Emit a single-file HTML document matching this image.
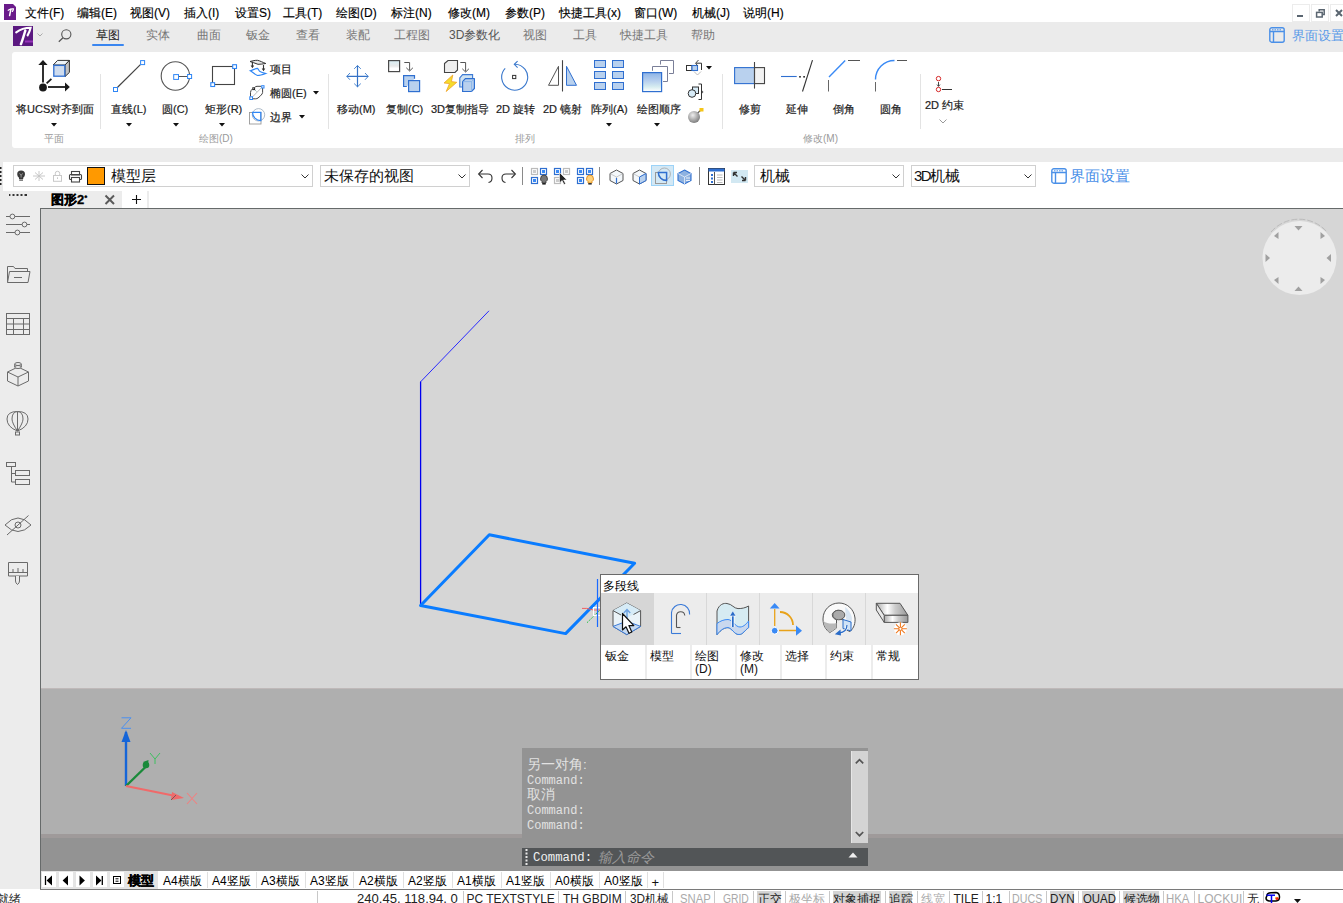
<!DOCTYPE html>
<html><head><meta charset="utf-8">
<style>
*{margin:0;padding:0;box-sizing:border-box}
html,body{width:1343px;height:903px;overflow:hidden;background:#fff;font-family:"Liberation Sans",sans-serif;color:#000}
.a{position:absolute}
.t{position:absolute;white-space:nowrap;line-height:1}
svg{position:absolute;overflow:visible}
</style></head><body>
<div class="a" style="left:0px;top:0px;width:1343px;height:22px;background:#fff;"></div>
<div class="a" style="left:0px;top:22px;width:1343px;height:169px;background:#ebebeb;"></div>
<div class="a" style="left:12px;top:52px;width:1340px;height:96px;background:#fff;border-radius:3px"></div>
<div class="a" style="left:3px;top:162px;width:1340px;height:29px;background:#fff;"></div>
<svg style="left:0px;top:165px;" width="3" height="22" viewBox="0 0 3 22"><g fill="#222"><rect x="0" y="2" width="1.5" height="2"/><rect x="0" y="6" width="1.5" height="2"/><rect x="0" y="10" width="1.5" height="2"/><rect x="0" y="14" width="1.5" height="2"/><rect x="0" y="18" width="1.5" height="2"/></g></svg>
<div class="a" style="left:0px;top:191px;width:40px;height:698px;background:#ececec;"></div>
<div class="a" style="left:40px;top:191px;width:1303px;height:17px;background:#fff;"></div>
<div class="a" style="left:40px;top:191px;width:82px;height:17px;background:#ececec;"></div>
<div class="a" style="left:147px;top:191px;width:2px;height:17px;background:#ececec;"></div>
<div class="a" style="left:40px;top:208px;width:1303px;height:682px;background:#666a6a;"></div>
<div class="a" style="left:41px;top:209px;width:1302px;height:479px;background:#d6d6d6;"></div>
<div class="a" style="left:41px;top:688px;width:1302px;height:146px;background:#afafaf;"></div>
<div class="a" style="left:41px;top:688px;width:1302px;height:1px;background:#bfb9b9;"></div>
<div class="a" style="left:41px;top:834px;width:1302px;height:4px;background:#9f9a9a;"></div>
<div class="a" style="left:41px;top:838px;width:1302px;height:33px;background:#939393;"></div>
<div class="a" style="left:41px;top:871px;width:1302px;height:18px;background:#fff;"></div>
<div class="a" style="left:0px;top:889px;width:1343px;height:14px;background:#fff;"></div>
<div class="t" style="left:25px;top:7px;font-size:12px;color:#000;-webkit-text-stroke:0.15px #000">文件(F)</div>
<div class="t" style="left:77px;top:7px;font-size:12px;color:#000;-webkit-text-stroke:0.15px #000">编辑(E)</div>
<div class="t" style="left:130px;top:7px;font-size:12px;color:#000;-webkit-text-stroke:0.15px #000">视图(V)</div>
<div class="t" style="left:184px;top:7px;font-size:12px;color:#000;-webkit-text-stroke:0.15px #000">插入(I)</div>
<div class="t" style="left:235px;top:7px;font-size:12px;color:#000;-webkit-text-stroke:0.15px #000">设置S)</div>
<div class="t" style="left:283px;top:7px;font-size:12px;color:#000;-webkit-text-stroke:0.15px #000">工具(T)</div>
<div class="t" style="left:336px;top:7px;font-size:12px;color:#000;-webkit-text-stroke:0.15px #000">绘图(D)</div>
<div class="t" style="left:391px;top:7px;font-size:12px;color:#000;-webkit-text-stroke:0.15px #000">标注(N)</div>
<div class="t" style="left:448px;top:7px;font-size:12px;color:#000;-webkit-text-stroke:0.15px #000">修改(M)</div>
<div class="t" style="left:505px;top:7px;font-size:12px;color:#000;-webkit-text-stroke:0.15px #000">参数(P)</div>
<div class="t" style="left:559px;top:7px;font-size:12px;color:#000;-webkit-text-stroke:0.15px #000">快捷工具(x)</div>
<div class="t" style="left:634px;top:7px;font-size:12px;color:#000;-webkit-text-stroke:0.15px #000">窗口(W)</div>
<div class="t" style="left:692px;top:7px;font-size:12px;color:#000;-webkit-text-stroke:0.15px #000">机械(J)</div>
<div class="t" style="left:743px;top:7px;font-size:12px;color:#000;-webkit-text-stroke:0.15px #000">说明(H)</div>
<div class="a" style="left:1292px;top:4px;width:18px;height:18px;background:#fff;border:1px solid #ececec"></div>
<div class="a" style="left:1311px;top:4px;width:18px;height:18px;background:#fff;border:1px solid #ececec"></div>
<div class="a" style="left:1330px;top:4px;width:18px;height:18px;background:#fff;border:1px solid #ececec"></div>
<svg style="left:1292px;top:4px;" width="18" height="18" viewBox="0 0 18 18"><rect x="5" y="11" width="6" height="2" fill="#5a6570"/></svg>
<svg style="left:1311px;top:4px;" width="18" height="18" viewBox="0 0 18 18"><rect x="5.6" y="8.4" width="5.6" height="4.6" fill="none" stroke="#5a6570" stroke-width="1.5"/><path d="M8.2 7.6 V5.8 H13.2 V10.4 H11.8" fill="none" stroke="#5a6570" stroke-width="1.5"/></svg>
<svg style="left:1330px;top:4px;" width="18" height="18" viewBox="0 0 18 18"><path d="M6 6 L12 12 M12 6 L6 12" stroke="#5a6570" stroke-width="2"/></svg>
<svg style="left:4px;top:4px;" width="12" height="16" viewBox="0 0 12 16"><path d="M0 0 H9 L12 3 V16 H0 Z" fill="#6a1b8a"/><path d="M4.2 6.2 C6 5.2 8 4.8 9.4 5 C9.2 6.3 8.8 7 8.3 7.4" stroke="#fff" stroke-width="1.3" fill="none" stroke-linecap="round"/><path d="M6.8 5.6 L5.6 11.6" stroke="#fff" stroke-width="1.5" stroke-linecap="round"/></svg>
<svg style="left:13px;top:26px;" width="20" height="20" viewBox="0 0 20 20"><rect width="20" height="20" fill="#5a1880"/><rect x="12" y="14.5" width="8" height="2" fill="#a63cc8" opacity=".8"/><path d="M3.2 6.3 C6 4.2 12 1.8 17.6 1.8 C17 4.5 16 7 14.6 9.4" stroke="#fff" stroke-width="2.1" fill="none" stroke-linecap="round"/><path d="M12.3 4.6 C11 9 9.6 14 7.9 18.2" stroke="#fff" stroke-width="2.5" fill="none" stroke-linecap="round"/></svg>
<svg style="left:37px;top:33px;" width="6" height="4" viewBox="0 0 6 4"><path d="M0.5 0.5 L3 3 L5.5 0.5" stroke="#aaa" fill="none"/></svg>
<svg style="left:58px;top:29px;" width="14" height="14" viewBox="0 0 14 14"><circle cx="8.3" cy="5.3" r="4.6" stroke="#555" stroke-width="1.1" fill="none"/><path d="M5 8.7 L0.8 12.8" stroke="#555" stroke-width="1.2"/></svg>
<div class="t" style="left:96px;top:29px;font-size:12px;color:#222;">草图</div>
<div class="t" style="left:146px;top:29px;font-size:12px;color:#777;">实体</div>
<div class="t" style="left:197px;top:29px;font-size:12px;color:#777;">曲面</div>
<div class="t" style="left:246px;top:29px;font-size:12px;color:#777;">钣金</div>
<div class="t" style="left:296px;top:29px;font-size:12px;color:#777;">查看</div>
<div class="t" style="left:346px;top:29px;font-size:12px;color:#777;">装配</div>
<div class="t" style="left:394px;top:29px;font-size:12px;color:#777;">工程图</div>
<div class="t" style="left:449px;top:29px;font-size:12px;color:#555;">3D参数化</div>
<div class="t" style="left:523px;top:29px;font-size:12px;color:#777;">视图</div>
<div class="t" style="left:573px;top:29px;font-size:12px;color:#777;">工具</div>
<div class="t" style="left:620px;top:29px;font-size:12px;color:#777;">快捷工具</div>
<div class="t" style="left:691px;top:29px;font-size:12px;color:#777;">帮助</div>
<div class="a" style="left:92px;top:44px;width:32px;height:2px;background:#3a86f0;border-radius:1px"></div>
<svg style="left:1269px;top:27px;" width="16" height="16" viewBox="0 0 16 16"><rect x="0.8" y="0.8" width="14.4" height="14.4" rx="2" fill="none" stroke="#4a90e8" stroke-width="1.4"/><path d="M1 4.5 H15 M4.5 4.5 V15" stroke="#4a90e8" stroke-width="1.4"/><path d="M3 2.8 H13" stroke="#4a90e8" stroke-width="1" stroke-dasharray="1.5 1"/></svg>
<div class="t" style="left:1292px;top:29px;font-size:13px;color:#5a9ae8;">界面设置</div>
<div class="t" style="left:16px;top:104px;font-size:11px;color:#222;-webkit-text-stroke:0.2px #222">将UCS对齐到面</div>
<div class="t" style="left:111px;top:104px;font-size:11px;color:#222;-webkit-text-stroke:0.2px #222">直线(L)</div>
<div class="t" style="left:162px;top:104px;font-size:11px;color:#222;-webkit-text-stroke:0.2px #222">圆(C)</div>
<div class="t" style="left:205px;top:104px;font-size:11px;color:#222;-webkit-text-stroke:0.2px #222">矩形(R)</div>
<div class="t" style="left:337px;top:104px;font-size:11px;color:#222;-webkit-text-stroke:0.2px #222">移动(M)</div>
<div class="t" style="left:386px;top:104px;font-size:11px;color:#222;-webkit-text-stroke:0.2px #222">复制(C)</div>
<div class="t" style="left:431px;top:104px;font-size:11px;color:#222;-webkit-text-stroke:0.2px #222">3D复制指导</div>
<div class="t" style="left:496px;top:104px;font-size:11px;color:#222;-webkit-text-stroke:0.2px #222">2D 旋转</div>
<div class="t" style="left:543px;top:104px;font-size:11px;color:#222;-webkit-text-stroke:0.2px #222">2D 镜射</div>
<div class="t" style="left:591px;top:104px;font-size:11px;color:#222;-webkit-text-stroke:0.2px #222">阵列(A)</div>
<div class="t" style="left:637px;top:104px;font-size:11px;color:#222;-webkit-text-stroke:0.2px #222">绘图顺序</div>
<div class="t" style="left:739px;top:104px;font-size:11px;color:#222;-webkit-text-stroke:0.2px #222">修剪</div>
<div class="t" style="left:786px;top:104px;font-size:11px;color:#222;-webkit-text-stroke:0.2px #222">延伸</div>
<div class="t" style="left:833px;top:104px;font-size:11px;color:#222;-webkit-text-stroke:0.2px #222">倒角</div>
<div class="t" style="left:880px;top:104px;font-size:11px;color:#222;-webkit-text-stroke:0.2px #222">圆角</div>
<div class="t" style="left:925px;top:100px;font-size:11px;color:#222;-webkit-text-stroke:0.2px #222">2D 约束</div>
<div class="t" style="left:270px;top:64px;font-size:11px;color:#222;-webkit-text-stroke:0.2px #222">项目</div>
<div class="t" style="left:270px;top:88px;font-size:11px;color:#222;-webkit-text-stroke:0.2px #222">椭圆(E)</div>
<div class="t" style="left:270px;top:112px;font-size:11px;color:#222;-webkit-text-stroke:0.2px #222">边界</div>
<div class="t" style="left:44px;top:134px;font-size:10px;color:#999;">平面</div>
<div class="t" style="left:199px;top:134px;font-size:10px;color:#999;">绘图(D)</div>
<div class="t" style="left:515px;top:134px;font-size:10px;color:#999;">排列</div>
<div class="t" style="left:803px;top:134px;font-size:10px;color:#999;">修改(M)</div>
<svg style="left:51px;top:123px;" width="6" height="4" viewBox="0 0 6 4"><path d="M0 0 H6 L3 3.4 Z" fill="#111"/></svg>
<svg style="left:126px;top:123px;" width="6" height="4" viewBox="0 0 6 4"><path d="M0 0 H6 L3 3.4 Z" fill="#111"/></svg>
<svg style="left:173px;top:123px;" width="6" height="4" viewBox="0 0 6 4"><path d="M0 0 H6 L3 3.4 Z" fill="#111"/></svg>
<svg style="left:219px;top:123px;" width="6" height="4" viewBox="0 0 6 4"><path d="M0 0 H6 L3 3.4 Z" fill="#111"/></svg>
<svg style="left:606px;top:123px;" width="6" height="4" viewBox="0 0 6 4"><path d="M0 0 H6 L3 3.4 Z" fill="#111"/></svg>
<svg style="left:654px;top:123px;" width="6" height="4" viewBox="0 0 6 4"><path d="M0 0 H6 L3 3.4 Z" fill="#111"/></svg>
<svg style="left:313px;top:91px;" width="6" height="4" viewBox="0 0 6 4"><path d="M0 0 H6 L3 3.4 Z" fill="#111"/></svg>
<svg style="left:299px;top:115px;" width="6" height="4" viewBox="0 0 6 4"><path d="M0 0 H6 L3 3.4 Z" fill="#111"/></svg>
<svg style="left:706px;top:66px;" width="6" height="4" viewBox="0 0 6 4"><path d="M0 0 H6 L3 3.4 Z" fill="#111"/></svg>
<svg style="left:939px;top:119px;" width="8" height="5" viewBox="0 0 8 5"><path d="M0.5 0.5 L4 4 L7.5 0.5" stroke="#999" fill="none"/></svg>
<div class="a" style="left:100px;top:74px;width:1px;height:55px;background:#e3e3e3;"></div>
<div class="a" style="left:328px;top:74px;width:1px;height:55px;background:#e3e3e3;"></div>
<div class="a" style="left:722px;top:74px;width:1px;height:55px;background:#e3e3e3;"></div>
<div class="a" style="left:920px;top:74px;width:1px;height:55px;background:#e3e3e3;"></div>
<svg style="left:34px;top:56px;" width="40" height="40" viewBox="0 0 40 40"><path d="M9 26.5 V8.5" stroke="#1a1a1a" stroke-width="1.8"/><path d="M4.3 9 L9 4 L13.6 9 Z" fill="#1a1a1a"/><circle cx="9" cy="31.5" r="3.9" fill="#1a1a1a"/><path d="M14 31 H31" stroke="#1a1a1a" stroke-width="1.8"/><path d="M31 26.5 L35.8 31 L31 35.5 Z" fill="#1a1a1a"/><path d="M12.6 27.4 L17.4 22.8" stroke="#1a1a1a" stroke-width="1.8"/><path d="M19.2 9 L23.6 4.4 H35.4 L31 9 Z" fill="#eef4f8" stroke="#333" stroke-width="1"/><path d="M31 9 L35.4 4.4 V16.4 L31 20.6 Z" fill="#c2c2c2" stroke="#333" stroke-width="1"/><rect x="19.8" y="9.4" width="11" height="10.8" fill="#cfdcee" stroke="#2f6fd0" stroke-width="1.3"/></svg>
<svg style="left:108px;top:56px;" width="40" height="40" viewBox="0 0 40 40"><path d="M9.6 31.2 L32.4 8.6" stroke="#444" stroke-width="1.2"/><rect x="5.5" y="31.5" width="4" height="4" fill="#fff" stroke="#2f86f5" stroke-width="1"/><rect x="32.6" y="4.6" width="4" height="4" fill="#fff" stroke="#2f86f5" stroke-width="1"/></svg>
<svg style="left:156px;top:56px;" width="40" height="40" viewBox="0 0 40 40"><circle cx="19.4" cy="20" r="14.2" fill="none" stroke="#555" stroke-width="1.1"/><path d="M22.6 20.5 H31.2" stroke="#555" stroke-width="1"/><rect x="17.7" y="18.6" width="4.8" height="4.8" fill="#fff" stroke="#2f86f5" stroke-width="1"/><rect x="31.6" y="18.5" width="4" height="4" fill="#fff" stroke="#2f86f5" stroke-width="1"/></svg>
<svg style="left:204px;top:56px;" width="40" height="40" viewBox="0 0 40 40"><rect x="8.5" y="10.5" width="22" height="18" fill="none" stroke="#444" stroke-width="1.1"/><rect x="28.7" y="8.7" width="3.8" height="3.8" fill="#fff" stroke="#2f86f5" stroke-width="1.1"/><rect x="6.8" y="26.7" width="3.8" height="3.8" fill="#fff" stroke="#2f86f5" stroke-width="1.1"/></svg>
<svg style="left:246px;top:58px;" width="24" height="18" viewBox="0 0 24 18"><path d="M4 3.5 C7 2.8 9 2.2 11.5 2.3 C14 2.8 17 4.5 19.8 5.5 C17 6 14.5 6.3 12 6.3 C9 5.5 6.5 4 4 3.5 Z" fill="#e8e8e8" stroke="#333" stroke-width="1"/><path d="M6.4 3.8 V8 M17.5 7 V11" stroke="#333" stroke-width="1.1"/><path d="M4.6 7.6 H8.2 L6.4 10.2 Z M15.7 10.6 H19.3 L17.5 13.2 Z" fill="#333"/><path d="M4.3 12.8 C7 12 9 10.5 11.4 10.3 C12.5 11 13 13 14 13.5 C16 14.5 18 15 19.8 15.5 C17 16.5 14 17.5 11.5 17.5 C9 16.5 6.5 14 4.3 12.8 Z" fill="#fff" stroke="#2f86f5" stroke-width="1.2"/></svg>
<svg style="left:246px;top:83px;" width="24" height="20" viewBox="0 0 24 20"><path d="M4.5 13.5 V9.5 Q4.5 7.6 6.4 6 M8.6 4.6 Q9.5 3.3 11 3.3 H15.2 M16.6 4.8 V9.5 Q16.6 10.8 14.5 12.8 L12 15 Q11 15.8 9.5 15.8 H6.8" fill="none" stroke="#444" stroke-width="1"/><path d="M6.6 13.8 L15.4 4.8" stroke="#aaa" stroke-width=".8"/><path d="M8.6 6.6 L10.6 8.6" stroke="#8aa" stroke-width=".8"/><rect x="6.8" y="4.8" width="1.8" height="1.8" fill="#fff" stroke="#222" stroke-width="1"/><rect x="15.7" y="2.7" width="2.3" height="2.3" fill="#fff" stroke="#2f86f5" stroke-width="1"/><rect x="3.8" y="13.8" width="2.7" height="2.7" fill="#fff" stroke="#2f86f5" stroke-width="1"/></svg>
<svg style="left:246px;top:107.5px;" width="24" height="22" viewBox="0 0 24 22"><rect x="3.5" y="4.5" width="11.5" height="11.5" fill="none" stroke="#999" stroke-width="0.9"/><circle cx="12.5" cy="6.8" r="6.2" fill="none" stroke="#9ab" stroke-width="0.8"/><path d="M6.5 4.3 H14.8 V12.6 A8.3 8.3 0 0 1 6.5 4.3 Z" fill="none" stroke="#2f86f5" stroke-width="1.2"/></svg>
<svg style="left:340px;top:56px;" width="40" height="40" viewBox="0 0 40 40"><path d="M6.8 20.4 H28.2 M17.5 9.6 V31" stroke="#3572c6" stroke-width="1.2"/><path d="M10 17 L6.8 20.4 L10 23.8 M25 17 L28.2 20.4 L25 23.8 M14.2 12.8 L17.5 9.6 L20.8 12.8 M14.2 27.6 L17.5 30.8 L20.8 27.6" fill="none" stroke="#4a86d0" stroke-width="1"/></svg>
<svg style="left:384px;top:56px;" width="40" height="40" viewBox="0 0 40 40"><defs><linearGradient id="gcp" x1="0" y1="0" x2="0" y2="1"><stop offset="0" stop-color="#d8eef4"/><stop offset=".5" stop-color="#e9e9e9"/><stop offset=".7" stop-color="#fff"/></linearGradient></defs><rect x="4.6" y="4.6" width="11" height="11" fill="url(#gcp)" stroke="#4a4a4a" stroke-width="1.2"/><path d="M20.3 6.5 H25.6 V14.5" fill="none" stroke="#555" stroke-width="1"/><path d="M22.3 11.8 L25.6 15 L28.9 11.8" fill="none" stroke="#555" stroke-width="1"/><path d="M22.8 30.5 H19.6 V19.6 H30.5 V22.8" fill="#b9d1ee" stroke="#2f6fd0" stroke-width="1.2"/><rect x="24.6" y="24.6" width="11" height="11" fill="#b9d1ee" stroke="#2f6fd0" stroke-width="1.2"/></svg>
<svg style="left:440px;top:56px;" width="40" height="40" viewBox="0 0 40 40"><path d="M4.5 7.5 L8 4.5 H17.5 V14 L15 16.5 H4.5 Z" fill="#eee" stroke="#444" stroke-width="1.1"/><path d="M20.3 6.5 H25.6 V15.5" fill="none" stroke="#555" stroke-width="1"/><path d="M22.3 12.8 L25.6 16 L28.9 12.8" fill="none" stroke="#555" stroke-width="1"/><path d="M12.8 19 L4 27 L9.5 27.6 L6.2 35.5 L16.8 26.3 L11.4 25.6 Z" fill="#f5dc2c" stroke="#f0a32a" stroke-width="0.8"/><path d="M19.8 21.8 L22.6 18.6 H32.6 V28 L29.8 31 H19.8 Z" fill="#cfe3f2" stroke="#3d7ad4" stroke-width="1.1"/><path d="M22.6 25.6 L25.4 22.6 H34.4 V32.5 L31.6 35.5 H22.6 Z" fill="#b9d1ee" stroke="#2f6fd0" stroke-width="1.2"/><path d="M22.6 25.6 H31.6 L34.4 22.6 M31.6 25.6 V35.5" fill="none" stroke="#7fb0e8" stroke-width="0.8"/></svg>
<svg style="left:496px;top:56px;" width="40" height="40" viewBox="0 0 40 40"><path d="M9.2 12.3 A13 13 0 1 0 19 8.2" fill="none" stroke="#3a78cc" stroke-width="1.1"/><path d="M21.6 5.2 L18.3 8.3 L21.6 11.6" fill="none" stroke="#3a78cc" stroke-width="1.1"/><rect x="16.6" y="19.4" width="3.2" height="3.2" fill="#fff" stroke="#333" stroke-width="1"/></svg>
<svg style="left:542px;top:56px;" width="40" height="40" viewBox="0 0 40 40"><path d="M20.5 4.2 V35.5" stroke="#444" stroke-width="1.1"/><path d="M16.5 10.3 V29.3 H6.5 Z" fill="#fff" stroke="#555" stroke-width="1"/><path d="M24.5 10.3 L34.5 29.3 H24.5 Z" fill="#b9d1ee" stroke="#2f6fd0" stroke-width="1"/></svg>
<svg style="left:589px;top:56px;" width="40" height="40" viewBox="0 0 40 40"><rect x="5.5" y="4.5" width="11" height="7" fill="#b9d1ee" stroke="#2f6fd0" stroke-width="1"/><rect x="5.5" y="15.5" width="11" height="7" fill="#b9d1ee" stroke="#2f6fd0" stroke-width="1"/><rect x="5.5" y="26.5" width="11" height="7" fill="#b9d1ee" stroke="#2f6fd0" stroke-width="1"/><rect x="23.5" y="4.5" width="11" height="7" fill="#b9d1ee" stroke="#2f6fd0" stroke-width="1"/><rect x="23.5" y="15.5" width="11" height="7" fill="#b9d1ee" stroke="#2f6fd0" stroke-width="1"/><rect x="23.5" y="26.5" width="11" height="7" fill="#b9d1ee" stroke="#2f6fd0" stroke-width="1"/></svg>
<svg style="left:638px;top:56px;" width="40" height="40" viewBox="0 0 40 40"><defs><linearGradient id="gdo" x1="0" y1="0" x2="0" y2="1"><stop offset="0" stop-color="#8db3e6"/><stop offset=".45" stop-color="#b8d0ee"/><stop offset=".75" stop-color="#d6ecf0"/><stop offset="1" stop-color="#fff"/></linearGradient></defs><path d="M22.5 8.5 V4.5 H35.5 V17.5 H31" fill="none" stroke="#7a7f98" stroke-width="1"/><path d="M14.5 14.8 V10.5 H29.5 V25.5 H25" fill="none" stroke="#7a7f98" stroke-width="1"/><rect x="4.6" y="16.6" width="19" height="19" fill="url(#gdo)" stroke="#2f6fd0" stroke-width="1.2"/></svg>
<svg style="left:682px;top:56px;" width="36" height="72" viewBox="0 0 36 72"><rect x="4.5" y="9.5" width="5.5" height="5" fill="#fff" stroke="#333" stroke-width="1"/><rect x="10" y="9.5" width="5.5" height="5" fill="#b9d1ee" stroke="#2f6fd0" stroke-width="1.1"/><path d="M14 7.2 H19.5 V14" fill="none" stroke="#333" stroke-width="1"/><path d="M16.5 4 L13.5 7.3 L15.5 9.5" fill="none" stroke="#333" stroke-width="0.9"/><path d="M12 15.5 L15.5 19 L19 15.5" fill="none" stroke="#aaa" stroke-width="0.8"/><rect x="10.5" y="31" width="6" height="6.5" fill="#d8ecf8" stroke="#333" stroke-width="1"/><circle cx="10" cy="37.5" r="3.8" fill="#d8ecf8" stroke="#333" stroke-width="1"/><path d="M16.5 28 H19.5 V43.5 H16.5" fill="none" stroke="#333" stroke-width="1"/><path d="M20 34.5 L21.5 36 L20 37.5 Z" fill="#555"/><defs><radialGradient id="gbm" cx=".4" cy=".35" r=".7"><stop offset="0" stop-color="#eee"/><stop offset="1" stop-color="#777"/></radialGradient></defs><path d="M14.5 58 L19 54" stroke="#555" stroke-width="1.2"/><rect x="17.5" y="52" width="4" height="3.5" fill="#f5c518"/><circle cx="12" cy="61" r="6" fill="url(#gbm)"/></svg>
<svg style="left:730px;top:56px;" width="40" height="40" viewBox="0 0 40 40"><rect x="4.6" y="11.6" width="20" height="16" fill="#b9d1ee" stroke="#2f6fd0" stroke-width="1.1"/><rect x="24.5" y="11.6" width="10" height="16" fill="#f2f2f2" stroke="#444" stroke-width="1.1"/><path d="M24.5 6 V32.6" stroke="#444" stroke-width="1.1"/></svg>
<svg style="left:777px;top:56px;" width="40" height="40" viewBox="0 0 40 40"><path d="M4 20.5 H19.7" stroke="#2f6fd0" stroke-width="1.1"/><rect x="22.2" y="20" width="1.6" height="1.6" fill="#222"/><rect x="26.3" y="20" width="1.6" height="1.6" fill="#222"/><path d="M35.5 4.2 L25.5 35.5" stroke="#333" stroke-width="1.1"/></svg>
<svg style="left:824px;top:56px;" width="40" height="40" viewBox="0 0 40 40"><path d="M24 4.5 H36" stroke="#555" stroke-width="1"/><path d="M5 21 L21.2 4.6" stroke="#3a8af5" stroke-width="1.4"/><path d="M4.5 24 V35.5" stroke="#666" stroke-width="1"/></svg>
<svg style="left:871px;top:56px;" width="40" height="40" viewBox="0 0 40 40"><path d="M26 4.5 H36" stroke="#555" stroke-width="1"/><path d="M4.5 23.5 A19 19 0 0 1 23.5 4.5" fill="none" stroke="#3a8af5" stroke-width="1.4"/><path d="M4.5 26 V35.5" stroke="#666" stroke-width="1"/></svg>
<svg style="left:924px;top:70px;" width="40" height="30" viewBox="0 0 40 30"><circle cx="14.5" cy="8.6" r="2.2" fill="none" stroke="#d62828" stroke-width="1"/><circle cx="14.5" cy="19.5" r="2.2" fill="none" stroke="#d62828" stroke-width="1"/><path d="M14.5 12 V16.3 M13 14.6 L14.5 16.3 L16 14.6" fill="none" stroke="#333" stroke-width="0.9"/><path d="M18 19.5 H28" stroke="#333" stroke-width="1"/></svg>
<div class="a" style="left:13px;top:165px;width:300px;height:22px;background:#fff;border:1px solid #d0d0d0"></div>
<svg style="left:13px;top:165px;" width="300" height="22" viewBox="0 0 300 22"><path d="M8.1 5.6 Q4.2 5.6 4.2 9.3 Q4.2 11.5 6 12.8 V14 H10.2 V12.8 Q12 11.5 12 9.3 Q12 5.6 8.1 5.6 Z" fill="#3a3a3a"/><rect x="6.2" y="14.4" width="3.8" height="1.4" fill="#666"/><path d="M6.6 8.4 L8.1 10.4 L9.6 8.4 M8.1 10.4 V12.6" stroke="#bbb" stroke-width=".7" fill="none"/><g stroke="#c8c8c8" stroke-width="1" fill="none"><path d="M20 11 H32 M26 6 V16 M22 7.5 L30 14.5 M30 7.5 L22 14.5"/></g><path d="M42.3 10 V8.3 Q42.3 6.3 44.5 6.3 Q46.7 6.3 46.7 8.3 V10" fill="none" stroke="#c8c8c8" stroke-width="1"/><rect x="40.5" y="10.5" width="8" height="5.8" fill="none" stroke="#c8c8c8" stroke-width="1"/><path d="M44.5 12.3 V14" stroke="#c8c8c8"/><rect x="58.5" y="6.5" width="8" height="3.5" fill="none" stroke="#444" stroke-width="1.1"/><rect x="56.5" y="9.5" width="12" height="5" rx="1" fill="none" stroke="#444" stroke-width="1.1"/><rect x="58.5" y="12.5" width="8" height="4.5" fill="#fff" stroke="#444" stroke-width="1.1"/><rect x="74.5" y="2.5" width="17" height="17" fill="#ff9900" stroke="#111" stroke-width="1"/><path d="M288.5 9.5 L292 13 L295.5 9.5" fill="none" stroke="#333" stroke-width="1"/></svg>
<div class="t" style="left:111px;top:168px;font-size:15px;color:#111;">模型层</div>
<div class="a" style="left:320px;top:165px;width:150px;height:22px;background:#fff;border:1px solid #d0d0d0"></div>
<div class="t" style="left:324px;top:168px;font-size:15px;color:#111;">未保存的视图</div>
<svg style="left:320px;top:165px;" width="150" height="22" viewBox="0 0 150 22"><path d="M138.5 9.5 L142 13 L145.5 9.5" fill="none" stroke="#333" stroke-width="1"/></svg>
<svg style="left:476px;top:166px;" width="44" height="20" viewBox="0 0 44 20"><path d="M3 8 H12 Q16 8 16 12 Q16 16 12.5 16.5" fill="none" stroke="#333" stroke-width="1.1"/><path d="M6.5 4 L2.6 8 L6.5 12" fill="none" stroke="#333" stroke-width="1.1"/><path d="M39 8 H30 Q26 8 26 12 Q26 16 29.5 16.5" fill="none" stroke="#333" stroke-width="1.1"/><path d="M35.5 4 L39.4 8 L35.5 12" fill="none" stroke="#333" stroke-width="1.1"/></svg>
<div class="a" style="left:522px;top:167px;width:1px;height:18px;background:#8a8a8a;"></div>
<div class="a" style="left:599px;top:167px;width:1px;height:18px;background:#8a8a8a;"></div>
<div class="a" style="left:699px;top:167px;width:1px;height:18px;background:#8a8a8a;"></div>
<svg style="left:531px;top:168px;" width="17" height="17" viewBox="0 0 17 17"><rect x="0.5" y="0.5" width="6" height="6" fill="#fff" stroke="#bbb" stroke-width="1.2"/><rect x="2" y="2" width="3" height="3" fill="#ccc"/><rect x="9.5" y="0.5" width="6" height="6" fill="#fff" stroke="#2f6fd0" stroke-width="1.2"/><rect x="11" y="2" width="3" height="3" fill="#3a8af5"/><rect x="0.5" y="9.5" width="6" height="6" fill="#fff" stroke="#2f6fd0" stroke-width="1.2"/><rect x="2" y="11" width="3" height="3" fill="#3a8af5"/><path d="M13 7 Q9.5 7 9.5 11 Q9.5 12.5 11 13.5 V15 H15 V13.5 Q16.5 12.5 16.5 11 Q16.5 7 13 7 Z" fill="#777" stroke="#333" stroke-width=".8"/><rect x="11.3" y="15" width="3.4" height="1.6" fill="#222"/></svg>
<svg style="left:554px;top:168px;" width="17" height="17" viewBox="0 0 17 17"><rect x="0.5" y="0.5" width="6" height="6" fill="#fff" stroke="#2f6fd0" stroke-width="1.2"/><rect x="2" y="2" width="3" height="3" fill="#3a8af5"/><rect x="9.5" y="0.5" width="6" height="6" fill="#fff" stroke="#bbb" stroke-width="1.2"/><rect x="11" y="2" width="3" height="3" fill="#ccc"/><rect x="0.5" y="9.5" width="6" height="6" fill="#fff" stroke="#bbb" stroke-width="1.2"/><rect x="2" y="11" width="3" height="3" fill="#ccc"/><path d="M5.5 4.5 V15 L8 12.5 L10 16.5 L11.6 15.8 L9.6 12 H13 Z" fill="#222" stroke="#fff" stroke-width=".6"/></svg>
<svg style="left:577px;top:168px;" width="17" height="17" viewBox="0 0 17 17"><rect x="0.5" y="0.5" width="6" height="6" fill="#fff" stroke="#2f6fd0" stroke-width="1.2"/><rect x="2" y="2" width="3" height="3" fill="#3a8af5"/><rect x="9.5" y="0.5" width="6" height="6" fill="#fff" stroke="#2f6fd0" stroke-width="1.2"/><rect x="11" y="2" width="3" height="3" fill="#3a8af5"/><rect x="0.5" y="9.5" width="6" height="6" fill="#fff" stroke="#2f6fd0" stroke-width="1.2"/><rect x="2" y="11" width="3" height="3" fill="#3a8af5"/><path d="M13 7 Q9.5 7 9.5 11 Q9.5 12.5 11 13.5 V15 H15 V13.5 Q16.5 12.5 16.5 11 Q16.5 7 13 7 Z" fill="#ffd27a" stroke="#e08a1a" stroke-width=".9"/><rect x="11.3" y="15" width="3.4" height="1.6" fill="#333"/></svg>
<svg style="left:609px;top:168.5px;" width="90" height="17" viewBox="0 0 90 17"><g transform="translate(0,0)"><path d="M7.5 1 L14 4.5 V11.5 L7.5 15 L1 11.5 V4.5 Z" fill="#f4f8fb" stroke="#555" stroke-width="1"/><path d="M1 4.5 L7.5 8 L14 4.5 M7.5 8 V15" fill="none" stroke="#aaa" stroke-width=".6"/><path d="M7.5 9 V14.6" stroke="#2f6fd0" stroke-width="1.2"/></g><g transform="translate(23,0)"><path d="M7.5 1 L14 4.5 V11.5 L7.5 15 L1 11.5 V4.5 Z" fill="#f4f8fb" stroke="#555" stroke-width="1"/><path d="M1 4.5 L7.5 8 L14 4.5 M7.5 8 V15" fill="none" stroke="#aaa" stroke-width=".6"/><path d="M7.5 8 L14 4.5 V11.5 L7.5 15 Z" fill="#b9d1ee" stroke="#2f6fd0" stroke-width="1"/></g><g transform="translate(68,0)"><path d="M7.5 1 L14 4.5 V11.5 L7.5 15 L1 11.5 V4.5 Z" fill="#8fb2e0" stroke="#2f6fd0" stroke-width="1.1"/><path d="M1 4.5 L7.5 8 L14 4.5 M7.5 8 V15" fill="none" stroke="#e8f0fa" stroke-width=".8"/><path d="M9 9 H13 M9 11.5 H13" stroke="#fff" stroke-width=".8"/></g></svg>
<div class="a" style="left:651px;top:165px;width:23px;height:21px;background:#d3e8f5;border:1px solid #9cd3f8"></div>
<svg style="left:651px;top:165px;" width="23" height="21" viewBox="0 0 23 21"><rect x="4.5" y="7.5" width="11" height="11" fill="none" stroke="#999" stroke-width="1"/><circle cx="13.4" cy="9" r="6" fill="none" stroke="#aaa" stroke-width=".9"/><path d="M7.3 7.6 H15.6 V15.6 A8.2 8.2 0 0 1 7.3 7.6 Z" fill="none" stroke="#2f6fd0" stroke-width="1.5"/></svg>
<svg style="left:708px;top:168px;" width="17" height="17" viewBox="0 0 17 17"><rect x="0.5" y="0.5" width="16" height="16" fill="#fff" stroke="#333" stroke-width="1"/><rect x="0.5" y="0.5" width="16" height="3" fill="#2f6fd0"/><rect x="3" y="6" width="2" height="2" fill="#2f6fd0"/><rect x="3" y="9.5" width="2" height="2" fill="#2f6fd0"/><rect x="3" y="13" width="2" height="2" fill="#2f6fd0"/><path d="M6.5 4 V16.5" stroke="#555"/><path d="M9 7 H14.5 M9 9.5 H14.5 M9 12 H14.5 M9 14.5 H14.5" stroke="#aaa" stroke-width=".8"/></svg>
<svg style="left:731px;top:170px;" width="17" height="13" viewBox="0 0 17 13"><rect width="17" height="13" fill="#d2e8f2"/><path d="M2.5 2.5 L6.5 6.5 M2.5 2.5 H6 M2.5 2.5 V6 M14.5 10.5 L10.5 6.5 M14.5 10.5 H11 M14.5 10.5 V7" stroke="#333" stroke-width="1.4" fill="none"/></svg>
<div class="a" style="left:754px;top:165px;width:150px;height:22px;background:#fff;border:1px solid #d0d0d0"></div>
<div class="t" style="left:760px;top:168px;font-size:15px;color:#111;">机械</div>
<svg style="left:754px;top:165px;" width="150" height="22" viewBox="0 0 150 22"><path d="M138.5 9.5 L142 13 L145.5 9.5" fill="none" stroke="#333" stroke-width="1"/></svg>
<div class="a" style="left:911px;top:165px;width:125px;height:22px;background:#fff;border:1px solid #d0d0d0"></div>
<div class="t" style="left:914px;top:168px;font-size:15px;color:#111;"><span style="letter-spacing:-1.6px">3D</span>机械</div>
<svg style="left:911px;top:165px;" width="125" height="22" viewBox="0 0 125 22"><path d="M113.5 9.5 L117 13 L120.5 9.5" fill="none" stroke="#333" stroke-width="1"/></svg>
<svg style="left:1051px;top:168px;" width="16" height="16" viewBox="0 0 16 16"><rect x="0.8" y="0.8" width="14.4" height="14.4" rx="2" fill="none" stroke="#4a90e8" stroke-width="1.4"/><path d="M1 4.5 H15 M4.5 4.5 V15" stroke="#4a90e8" stroke-width="1.4"/><path d="M3 2.8 H13" stroke="#4a90e8" stroke-width="1" stroke-dasharray="1.5 1"/></svg>
<div class="t" style="left:1070px;top:168px;font-size:15px;color:#4a90e8;">界面设置</div>
<svg style="left:0px;top:191px;" width="40" height="400" viewBox="0 0 40 400"><g fill="#333"><rect x="9" y="3" width="1.4" height="2"/><rect x="12.5" y="3" width="2" height="2"/><rect x="16.5" y="3" width="2" height="2"/><rect x="20.5" y="3" width="2" height="2"/><rect x="24.5" y="3" width="2.5" height="2"/></g><g stroke="#6a6a6a" stroke-width="1" fill="#ececec"><path d="M6 25.5 H30 M6 33.5 H30 M6 41.5 H30"/><circle cx="12.4" cy="25.5" r="2.4"/><circle cx="24.5" cy="33.5" r="2.4"/><circle cx="17.4" cy="41.5" r="2.4"/><path d="M7.5 91.5 V75.5 H13.5 L15 77.5 H27.5 V80"/><path d="M7.5 91.5 L9.5 80.5 H30 L28 91.5 Z"/><path d="M14 86.5 H22"/><rect x="6.5" y="122.5" width="23" height="21"/><path d="M6.5 127.5 H29.5 M6.5 133 H29.5 M6.5 138.5 H29.5 M13.5 127.5 V143.5 M23.5 127.5 V143.5"/><path d="M18 176 L28.5 181 V190 L18 195 L7.5 190 V181 Z"/><path d="M7.5 181 L18 186 L28.5 181 M18 186 V195"/><ellipse cx="18" cy="176" rx="3.3" ry="1.5"/><path d="M14.7 173 V176 M21.3 173 V176"/><ellipse cx="18" cy="173" rx="3.3" ry="1.5"/><path d="M17.5 240 Q7 236 7 228 Q7 220.5 17.5 220.5 Q28 220.5 28 228 Q28 236 17.5 240 Z"/><path d="M17.5 240 Q12 232 12 228 Q12 221 17.5 220.5 Q23 221 23 228 Q23 232 17.5 240 M17.5 220.5 V240"/><rect x="15.5" y="241" width="4" height="3"/><rect x="6.5" y="271.5" width="9" height="4"/><path d="M11.5 275.5 V291 H15.5 M11.5 282.5 H15.5"/><rect x="15.5" y="279.5" width="14" height="5"/><rect x="15.5" y="288.5" width="14" height="5"/><path d="M5 334 Q18 320 31 334 Q18 347 5 334 Z"/><circle cx="18" cy="334" r="3"/><path d="M7 344 L28.5 324.5"/><path d="M8.5 371.5 H27.5 V385 H8.5 Z M8.5 381.5 H27.5 M13 381.5 V378 M18 381.5 V377 M23 381.5 V378"/><path d="M15.5 385 V390 Q15.5 392 17.5 393.5 Q19.5 392 19.5 390 V385"/></g></svg>
<div class="t" style="left:51px;top:193px;font-size:13px;color:#000;font-weight:700;-webkit-text-stroke:0.3px #000">图形2<span style="font-size:9px;vertical-align:top">•</span></div>
<svg style="left:104px;top:194px;" width="12" height="12" viewBox="0 0 12 12"><path d="M1.5 1.5 L10 10 M10 1.5 L1.5 10" stroke="#5a5a5a" stroke-width="2"/></svg>
<div class="a" style="left:122px;top:191px;width:25px;height:17px;background:#fff;"></div>
<svg style="left:131px;top:194px;" width="12" height="12" viewBox="0 0 12 12"><path d="M1 5.5 H10 M5.5 1 V10" stroke="#111" stroke-width="1.1"/></svg>
<svg style="left:1262px;top:220px;" width="75" height="76" viewBox="0 0 75 76"><circle cx="37.5" cy="38" r="37" fill="#ececec"/><path d="M9 12 A37 37 0 0 1 65 12" fill="none" stroke="#bbb" stroke-width="1" stroke-dasharray="6 2"/><g fill="#a0a0a0"><path d="M32.5 6 H40.5 L36.5 10.5 Z"/><path d="M32.5 71 H40.5 L36.5 66.5 Z"/><path d="M3.5 34 V42 L8 38 Z"/><path d="M69 34 V42 L64.5 38 Z"/><path d="M12 16 L16.5 12 V19 Z" transform=""/><path d="M63 16 L58.5 12 V19 Z"/><path d="M12 60 L16.5 64 V57 Z"/><path d="M63 60 L58.5 64 V57 Z"/></g></svg>
<svg style="left:41px;top:209px;" width="1302" height="479" viewBox="0 0 1302 479"><path d="M379.6 172.8 L448 101.8" stroke="#2a2aff" stroke-width="1" fill="none"/><path d="M379.6 172.5 V396" stroke="#0000f0" stroke-width="1.3" fill="none"/><path d="M379.6 396.5 L448.3 325.8 L593.6 354.3 L524.6 424.6 Z" fill="none" stroke="#0a7cff" stroke-width="3" stroke-linejoin="round"/><path d="M541 399.4 H545.7 L552.3 401 H559" stroke="#f06060" stroke-width="1" fill="none"/><path d="M546 413.7 L559 401" stroke="#20c040" stroke-width="1" stroke-dasharray="1.5 1" fill="none"/><rect x="552.5" y="398.5" width="7" height="8" fill="none" stroke="#fff" stroke-width="1"/><path d="M556.5 370 V418" stroke="#1a6aff" stroke-width="1.2"/></svg>
<svg style="left:100px;top:710px;" width="110" height="100" viewBox="0 0 110 100"><path d="M26 76 V22" stroke="#1565d8" stroke-width="2.4"/><path d="M21.5 32 L26 20 L30.5 32 Z" fill="#1565d8"/><path d="M21.5 7.8 H31 L21.5 18.3 H31" fill="none" stroke="#4a8ff0" stroke-width="1"/><path d="M26 76 L45.5 57" stroke="#1a8a3a" stroke-width="2.4"/><circle cx="46" cy="55" r="3.3" fill="#1a8a3a"/><path d="M43 52 L48.5 50 L48 56 Z" fill="#1a8a3a"/><path d="M50 43 L55 49 L60 43 M55 49 V54" fill="none" stroke="#3ec060" stroke-width="1"/><path d="M26 76 L78 86.5" stroke="#f06a6a" stroke-width="2.2"/><path d="M72 82 L84 88 L71 90 Z" fill="#f06a6a"/><path d="M71 90 L76 85" stroke="#555" stroke-width="0.8"/><path d="M87 83 L97 94 M97 83 L87 94" stroke="#f08080" stroke-width="1.1"/></svg>
<div class="a" style="left:600px;top:574px;width:319px;height:106px;background:#fff;border:1px solid #6a6a6a"></div>
<div class="t" style="left:603px;top:580px;font-size:12px;color:#000;">多段线</div>
<div class="a" style="left:601px;top:593px;width:317px;height:52px;background:#ececec;"></div>
<div class="a" style="left:601px;top:593px;width:53px;height:52px;background:#d6d6d6;"></div>
<div class="a" style="left:706px;top:593px;width:1px;height:52px;background:#d8d8d8;"></div>
<div class="a" style="left:759px;top:593px;width:1px;height:52px;background:#d8d8d8;"></div>
<div class="a" style="left:812px;top:593px;width:1px;height:52px;background:#d8d8d8;"></div>
<div class="a" style="left:865px;top:593px;width:1px;height:52px;background:#d8d8d8;"></div>
<div class="a" style="left:645px;top:645px;width:2px;height:34px;background:#ececec;"></div>
<div class="a" style="left:690px;top:645px;width:2px;height:34px;background:#ececec;"></div>
<div class="a" style="left:735px;top:645px;width:2px;height:34px;background:#ececec;"></div>
<div class="a" style="left:780px;top:645px;width:2px;height:34px;background:#ececec;"></div>
<div class="a" style="left:825px;top:645px;width:2px;height:34px;background:#ececec;"></div>
<div class="a" style="left:871px;top:645px;width:2px;height:34px;background:#ececec;"></div>
<div class="t" style="left:605px;top:650px;font-size:12px;color:#111;">钣金</div>
<div class="t" style="left:650px;top:650px;font-size:12px;color:#111;">模型</div>
<div class="t" style="left:695px;top:650px;font-size:12px;color:#111;">绘图</div>
<div class="t" style="left:740px;top:650px;font-size:12px;color:#111;">修改</div>
<div class="t" style="left:785px;top:650px;font-size:12px;color:#111;">选择</div>
<div class="t" style="left:830px;top:650px;font-size:12px;color:#111;">约束</div>
<div class="t" style="left:876px;top:650px;font-size:12px;color:#111;">常规</div>
<div class="t" style="left:695px;top:663px;font-size:12px;color:#111;">(D)</div>
<div class="t" style="left:740px;top:663px;font-size:12px;color:#111;">(M)</div>
<svg style="left:601px;top:593px;" width="317" height="52" viewBox="0 0 317 52"><defs><linearGradient id="gsm" x1="0" y1="0" x2="0" y2="1"><stop offset="0" stop-color="#d6e8f6"/><stop offset=".6" stop-color="#eef6fc"/><stop offset="1" stop-color="#c9dcf2"/></linearGradient><linearGradient id="gsl" x1="0" y1="0" x2="1" y2="0"><stop offset="0" stop-color="#aaa"/><stop offset=".35" stop-color="#fff"/><stop offset=".6" stop-color="#ccc"/><stop offset="1" stop-color="#999"/></linearGradient></defs><path d="M25.8 10 L39.6 17.6 V33.4 L25.8 41.6 L12 33.4 V17.6 Z" fill="#eaf3f8" stroke="#555" stroke-width="1"/><path d="M25.8 10 L39.6 17.6 L25.8 25 L12 17.6 Z" fill="#d6ebf6"/><path d="M12 33.4 L25.8 28.2 L39.6 33.4 L25.8 41.6 Z" fill="#c6daf2" stroke="#3a7ad8" stroke-width="1"/><path d="M12 17.6 L20 22 M39.6 17.6 L32.5 21.5" stroke="#555" stroke-width="1"/><path d="M26 28 V17 M22.8 20 L26 16.6 L29.2 20" fill="none" stroke="#6aa0e0" stroke-width="1.4"/><path d="M21.5 20.5 V37 L25 33.8 L28 40.3 L30.8 39 L27.9 32.6 H32.8 Z" fill="#fff" stroke="#111" stroke-width="1.2" stroke-linejoin="round"/><path d="M70.5 40.5 V19.6 A9.1 9.1 0 0 1 88.6 21.5" fill="none" stroke="#3a7ad8" stroke-width="1.1"/><path d="M70.5 40.5 H80" stroke="#3a7ad8" stroke-width="1.1"/><path d="M75.5 34.5 V22.2 A4.2 4.2 0 0 1 83.8 22.5" fill="none" stroke="#555" stroke-width="1.1"/><path d="M75.5 34.5 H79.5" stroke="#555" stroke-width="1.1"/><path d="M116 18 C118 11 123 10 126 10.5 C131 11 133 15.6 137 15.6 C141 15.6 144 15 147.6 13 V34.6 C144 37 142 41.5 138 41.5 C133 41.5 131 35 127 34.6 C122 34.5 118 39 116 41.7 Z" fill="#d6ebf2" stroke="#555" stroke-width="1"/><path d="M116 30.6 C119 28 123 26.5 127 26.5 C132 26.8 134 34 139 34 C143 34 146 30 147.6 28 V34.6 C144 37 142 41.5 138 41.5 C133 41.5 131 35 127 34.6 C122 34.5 118 39 116 41.7 Z" fill="#c9d8ee" stroke="#3a8af5" stroke-width="1"/><path d="M131.8 34 V21" stroke="#fff" stroke-width="3.4"/><path d="M131.8 34 V21" stroke="#2a6cc8" stroke-width="1.8"/><path d="M128.6 23 L131.8 17.8 L135 23 Z" fill="#2a6cc8" stroke="#fff" stroke-width=".6"/><path d="M173.7 16 V33 M178 37.5 H195" fill="none" stroke="#e8a21a" stroke-width="1.3"/><path d="M179 19 A13 13 0 0 1 192 32" fill="none" stroke="#e8a21a" stroke-width="1.8"/><path d="M168.8 15.6 L173.7 10 L178.6 15.6 Z" fill="#3a8af5"/><path d="M195 32.6 L201 37.7 L195 42.8 Z" fill="#3a8af5"/><circle cx="173.7" cy="37.7" r="3.4" fill="#3a8af5" stroke="#fff" stroke-width="1"/><path d="M228.8 39.7 L235.5 35 V26.7 A6 4.8 0 1 1 240 26.4 L243 27 V36 L249 38.5 C253 35 254.5 30 254 25 C253 16 246 10 238 10 C229 10 222 17 222 26 C222 32 224.5 36.5 228.8 39.7 Z" fill="#fafafa" stroke="#555" stroke-width="1"/><path d="M222.3 28 C223 33 225.5 37 228.8 39.7 L235.5 35 V30 C232 31 226 31 222.3 28 Z" fill="#b8b8b8"/><path d="M244 14 C247 16 250 20 251 25 L250.5 33 L246 35 Z" fill="#d0e0f0" opacity=".8"/><ellipse cx="237.8" cy="22" rx="6" ry="4.8" fill="#aaa" stroke="#555" stroke-width=".9"/><path d="M242 26.5 L250 29 V38 L242 35.5 Z" fill="#cfe2f6" stroke="#2a6cc8" stroke-width="1"/><path d="M246 32 C246 37 243 39.5 238 40" fill="none" stroke="#fff" stroke-width="2.4"/><path d="M246 32 C246 37 243 39.5 238 40" fill="none" stroke="#2a6cc8" stroke-width="1.3"/><path d="M239.5 36.5 L233.8 41.3 L240 42.5 Z" fill="#2a6cc8"/><path d="M275.3 10.3 H299 L306.9 22.3 H283.2 Z" fill="url(#gsl)" stroke="#555" stroke-width="1"/><path d="M283.2 22.3 H306.9 V29.4 H283.2 Z" fill="url(#gsl)" stroke="#555" stroke-width="1"/><path d="M275.3 10.3 L283.2 22.3 V29.4 L275.3 17 Z" fill="#e8e8e8" stroke="#555" stroke-width="1"/><circle cx="299.4" cy="35.8" r="6.5" fill="#fff"/><path d="M299.4 29.3 V42.3 M292.9 35.8 H305.9 M295 31.4 L303.8 40.2 M303.8 31.4 L295 40.2" stroke="#f07a20" stroke-width="1.1"/><circle cx="299.4" cy="35.8" r="1.6" fill="#fff" stroke="#f07a20" stroke-width="1"/></svg>
<div class="a" style="left:522px;top:748px;width:346px;height:95px;background:#939393;"></div>
<div class="a" style="left:851px;top:751px;width:17px;height:92px;background:#d4d4d4;"></div>
<div class="a" style="left:851px;top:751px;width:1px;height:92px;background:#e6e6e6;"></div>
<svg style="left:851px;top:751px;" width="17" height="92" viewBox="0 0 17 92"><path d="M4.8 12.3 L8.5 8.6 L12.2 12.3" fill="none" stroke="#555" stroke-width="1.7"/><path d="M4.8 81 L8.5 84.7 L12.2 81" fill="none" stroke="#555" stroke-width="1.7"/></svg>
<div class="t" style="left:527px;top:758px;font-size:13.5px;color:#e2e2e2;font-family:'Liberation Sans',sans-serif">另一对角:</div>
<div class="t" style="left:527px;top:775px;font-size:12px;color:#e2e2e2;font-family:'Liberation Mono',monospace">Command:</div>
<div class="t" style="left:527px;top:788px;font-size:13.5px;color:#e2e2e2;font-family:'Liberation Sans',sans-serif">取消</div>
<div class="t" style="left:527px;top:805px;font-size:12px;color:#e2e2e2;font-family:'Liberation Mono',monospace">Command:</div>
<div class="t" style="left:527px;top:820px;font-size:12px;color:#e2e2e2;font-family:'Liberation Mono',monospace">Command:</div>
<div class="a" style="left:522px;top:848px;width:346px;height:18px;background:#525557;"></div>
<svg style="left:524px;top:848px;" width="6" height="18" viewBox="0 0 6 18"><g fill="#e8e8e8"><rect x="1.5" y="1" width="2" height="2"/><rect x="1.5" y="4.5" width="2" height="2"/><rect x="1.5" y="8" width="2" height="2"/><rect x="1.5" y="11.5" width="2" height="2"/><rect x="1.5" y="15" width="2" height="2"/></g></svg>
<div class="t" style="left:533px;top:852px;font-size:12.3px;color:#f0f0f0;font-family:'Liberation Mono',monospace">Command:</div>
<div class="t" style="left:598px;top:850px;font-size:14px;color:#9a9a9a;font-style:italic">输入命令</div>
<svg style="left:848px;top:851px;" width="10" height="8" viewBox="0 0 10 8"><path d="M0.5 6.5 L5 1.5 L9.5 6.5 Z" fill="#eee"/></svg>
<div class="a" style="left:40px;top:889px;width:1303px;height:1px;background:#7a7a7a;"></div>
<div class="a" style="left:41px;top:871px;width:83px;height:18px;background:#e4e4e4;"></div>
<div class="a" style="left:42px;top:872px;width:14px;height:15px;background:#fff;"></div>
<div class="a" style="left:59px;top:872px;width:14px;height:15px;background:#fff;"></div>
<div class="a" style="left:76px;top:872px;width:14px;height:15px;background:#fff;"></div>
<div class="a" style="left:93px;top:872px;width:14px;height:15px;background:#fff;"></div>
<div class="a" style="left:110px;top:872px;width:14px;height:15px;background:#fff;"></div>
<svg style="left:40px;top:871px;" width="90" height="18" viewBox="0 0 90 18"><path d="M5.5 5 V14" stroke="#000" stroke-width="1.3"/><path d="M12 4.6 V14.4 L6.6 9.5 Z" fill="#000"/><path d="M28 4.6 V14.4 L22.6 9.5 Z" fill="#000"/><path d="M39.5 4.6 V14.4 L44.9 9.5 Z" fill="#000"/><path d="M56 4.6 V14.4 L61.4 9.5 Z" fill="#000"/><path d="M62.3 5 V14" stroke="#000" stroke-width="1.3"/><rect x="73.5" y="5.5" width="7" height="7" fill="none" stroke="#000" stroke-width="1"/><path d="M75.5 7.8 H78.5 M75.5 10.2 H78.5" stroke="#000" stroke-width="1"/></svg>
<div class="a" style="left:124px;top:871px;width:34px;height:18px;background:#e4e4e4;"></div>
<div class="t" style="left:128px;top:874px;font-size:13px;color:#000;font-weight:700;-webkit-text-stroke:0.4px #000">模型</div>
<div class="t" style="left:163px;top:875px;font-size:12px;color:#000;">A4横版</div>
<div class="t" style="left:212px;top:875px;font-size:12px;color:#000;">A4竖版</div>
<div class="t" style="left:261px;top:875px;font-size:12px;color:#000;">A3横版</div>
<div class="t" style="left:310px;top:875px;font-size:12px;color:#000;">A3竖版</div>
<div class="t" style="left:359px;top:875px;font-size:12px;color:#000;">A2横版</div>
<div class="t" style="left:408px;top:875px;font-size:12px;color:#000;">A2竖版</div>
<div class="t" style="left:457px;top:875px;font-size:12px;color:#000;">A1横版</div>
<div class="t" style="left:506px;top:875px;font-size:12px;color:#000;">A1竖版</div>
<div class="t" style="left:555px;top:875px;font-size:12px;color:#000;">A0横版</div>
<div class="t" style="left:604px;top:875px;font-size:12px;color:#000;">A0竖版</div>
<div class="a" style="left:207px;top:872px;width:1px;height:16px;background:#e0e0e0;"></div>
<div class="a" style="left:256px;top:872px;width:1px;height:16px;background:#e0e0e0;"></div>
<div class="a" style="left:305px;top:872px;width:1px;height:16px;background:#e0e0e0;"></div>
<div class="a" style="left:353px;top:872px;width:1px;height:16px;background:#e0e0e0;"></div>
<div class="a" style="left:403px;top:872px;width:1px;height:16px;background:#e0e0e0;"></div>
<div class="a" style="left:452px;top:872px;width:1px;height:16px;background:#e0e0e0;"></div>
<div class="a" style="left:501px;top:872px;width:1px;height:16px;background:#e0e0e0;"></div>
<div class="a" style="left:550px;top:872px;width:1px;height:16px;background:#e0e0e0;"></div>
<div class="a" style="left:599px;top:872px;width:1px;height:16px;background:#e0e0e0;"></div>
<div class="a" style="left:647px;top:872px;width:1px;height:16px;background:#e0e0e0;"></div>
<div class="a" style="left:663px;top:872px;width:1px;height:16px;background:#e0e0e0;"></div>
<div class="t" style="left:651.5px;top:875.5px;font-size:13px;color:#111;">+</div>
<div class="t" style="left:-3px;top:893px;font-size:12px;color:#222;">就绪</div>
<div class="t" style="left:357px;top:893px;font-size:12px;color:#222;transform:scaleX(1.09);transform-origin:0 0">240.45, 118.94, 0</div>
<div class="a" style="left:757px;top:891px;width:24px;height:12px;background:#d4d4d4;"></div>
<div class="a" style="left:833px;top:891px;width:48px;height:12px;background:#d4d4d4;"></div>
<div class="a" style="left:889px;top:891px;width:23px;height:12px;background:#d4d4d4;"></div>
<div class="a" style="left:1050px;top:891px;width:24px;height:12px;background:#d4d4d4;"></div>
<div class="a" style="left:1082px;top:891px;width:33px;height:12px;background:#d4d4d4;"></div>
<div class="a" style="left:1123px;top:891px;width:36px;height:12px;background:#d4d4d4;"></div>
<div class="t" style="left:466.4px;top:893px;font-size:12px;color:#222;">PC TEXTSTYLE</div>
<div class="t" style="left:563px;top:893px;font-size:12px;color:#222;">TH GBDIM</div>
<div class="t" style="left:629.6px;top:893px;font-size:12px;color:#222;transform:scaleX(0.98);transform-origin:0 0">3D机械</div>
<div class="t" style="left:679.5px;top:893px;font-size:12px;color:#aaa;transform:scaleX(0.94);transform-origin:0 0">SNAP</div>
<div class="t" style="left:723px;top:893px;font-size:12px;color:#aaa;transform:scaleX(0.86);transform-origin:0 0">GRID</div>
<div class="t" style="left:757.5px;top:893px;font-size:12px;color:#222;">正交</div>
<div class="t" style="left:789px;top:893px;font-size:12px;color:#aaa;">极坐标</div>
<div class="t" style="left:833px;top:893px;font-size:12px;color:#222;">对象捕捉</div>
<div class="t" style="left:889px;top:893px;font-size:12px;color:#222;">追踪</div>
<div class="t" style="left:921px;top:893px;font-size:12px;color:#aaa;">线宽</div>
<div class="t" style="left:953.5px;top:893px;font-size:12px;color:#222;">TILE</div>
<div class="t" style="left:985.5px;top:893px;font-size:12px;color:#222;">1:1</div>
<div class="t" style="left:1011.7px;top:893px;font-size:12px;color:#aaa;transform:scaleX(0.89);transform-origin:0 0">DUCS</div>
<div class="t" style="left:1050px;top:893px;font-size:12px;color:#222;transform:scaleX(0.97);transform-origin:0 0">DYN</div>
<div class="t" style="left:1082.7px;top:893px;font-size:12px;color:#222;transform:scaleX(0.95);transform-origin:0 0">QUAD</div>
<div class="t" style="left:1123.5px;top:893px;font-size:12px;color:#222;">候选物</div>
<div class="t" style="left:1166.3px;top:893px;font-size:12px;color:#aaa;transform:scaleX(0.95);transform-origin:0 0">HKA</div>
<div class="t" style="left:1197.6px;top:893px;font-size:12px;color:#aaa;">LOCKUI</div>
<div class="t" style="left:1247.3px;top:893px;font-size:12px;color:#222;">无</div>
<div class="a" style="left:317px;top:891px;width:1px;height:12px;background:#c8c8c8;"></div>
<div class="a" style="left:463px;top:891px;width:1px;height:12px;background:#c8c8c8;"></div>
<div class="a" style="left:558px;top:891px;width:1px;height:12px;background:#c8c8c8;"></div>
<div class="a" style="left:625px;top:891px;width:1px;height:12px;background:#c8c8c8;"></div>
<div class="a" style="left:672px;top:891px;width:1px;height:12px;background:#c8c8c8;"></div>
<div class="a" style="left:714px;top:891px;width:1px;height:12px;background:#c8c8c8;"></div>
<div class="a" style="left:753px;top:891px;width:1px;height:12px;background:#c8c8c8;"></div>
<div class="a" style="left:785px;top:891px;width:1px;height:12px;background:#c8c8c8;"></div>
<div class="a" style="left:829px;top:891px;width:1px;height:12px;background:#c8c8c8;"></div>
<div class="a" style="left:885px;top:891px;width:1px;height:12px;background:#c8c8c8;"></div>
<div class="a" style="left:917px;top:891px;width:1px;height:12px;background:#c8c8c8;"></div>
<div class="a" style="left:949px;top:891px;width:1px;height:12px;background:#c8c8c8;"></div>
<div class="a" style="left:982px;top:891px;width:1px;height:12px;background:#c8c8c8;"></div>
<div class="a" style="left:1009px;top:891px;width:1px;height:12px;background:#c8c8c8;"></div>
<div class="a" style="left:1046px;top:891px;width:1px;height:12px;background:#c8c8c8;"></div>
<div class="a" style="left:1078px;top:891px;width:1px;height:12px;background:#c8c8c8;"></div>
<div class="a" style="left:1119px;top:891px;width:1px;height:12px;background:#c8c8c8;"></div>
<div class="a" style="left:1163px;top:891px;width:1px;height:12px;background:#c8c8c8;"></div>
<div class="a" style="left:1194px;top:891px;width:1px;height:12px;background:#c8c8c8;"></div>
<div class="a" style="left:1243px;top:891px;width:1px;height:12px;background:#c8c8c8;"></div>
<div class="a" style="left:1263px;top:891px;width:1px;height:12px;background:#c8c8c8;"></div>
<svg style="left:1264px;top:891px;" width="18" height="12" viewBox="0 0 18 12"><path d="M3 4.5 Q3 2 7 1.8 L12 1.5 Q15.5 2 15.5 6 Q15.5 9.8 12 10 L5 10 Q2 9.5 2 7 Z" fill="#fff" stroke="#000" stroke-width="1.5"/><path d="M2.5 4.2 H11" stroke="#0000ee" stroke-width="1.5"/><path d="M7.5 4 V12" stroke="#0000ee" stroke-width="1.5"/><circle cx="13" cy="7.5" r="1.6" fill="#f02010"/><circle cx="12.2" cy="6.5" r=".8" fill="#ffa000"/></svg>
<svg style="left:1294px;top:899px;" width="8" height="5" viewBox="0 0 8 5"><path d="M0 0 H7 L3.5 4 Z" fill="#111"/></svg>
</body></html>
